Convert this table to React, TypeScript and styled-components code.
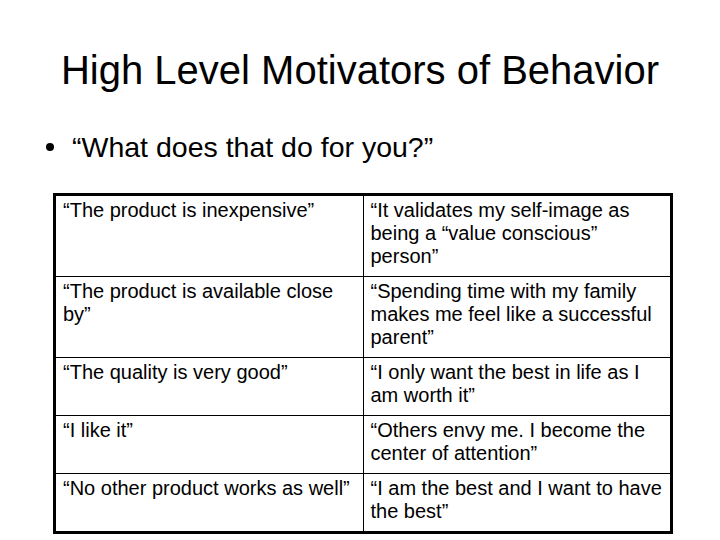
import React from "react";
import styled, { createGlobalStyle } from "styled-components";

const GlobalStyle = createGlobalStyle`
  html, body {
    margin: 0;
    padding: 0;
    background: #fff;
  }
  body {
    font-family: "Liberation Sans", Arial, sans-serif;
    color: #000;
  }
`;

const Slide = styled.div`
  width: 720px;
  height: 540px;
  overflow: hidden;
  display: flex;
  flex-direction: column;
  background: #fff;
`;

const Title = styled.h1`
  margin: 46px 0 0 0;
  font-size: 40px;
  line-height: 48px;
  font-weight: normal;
  text-align: center;
`;

const BulletList = styled.ul`
  list-style: none;
  margin: 36px 0 0 0;
  padding: 0 0 0 46px;
`;

const BulletItem = styled.li`
  display: flex;
  align-items: center;
  gap: 18px;
  font-size: 28.5px;
  line-height: 34px;
`;

const BulletDot = styled.span`
  width: 8px;
  height: 8px;
  border-radius: 50%;
  background: #000;
  flex-shrink: 0;
`;

const Table = styled.table`
  margin: 29px 0 0 53px;
  width: 620px;
  border-collapse: collapse;
  border: 3px solid #000;
  table-layout: fixed;
`;

const Cell = styled.td`
  border: 1px solid #000;
  vertical-align: top;
  padding: 3px 7px 8px 7px;
  font-size: 20px;
  line-height: 23px;
  width: 50%;
`;

const rows: [string, string][] = [
  [
    "“The product is inexpensive”",
    "“It validates my self-image as being a “value conscious” person”",
  ],
  [
    "“The product is available close by”",
    "“Spending time with my family makes me feel like a successful parent”",
  ],
  ["“The quality is very good”", "“I only want the best in life as I am worth it”"],
  ["“I like it”", "“Others envy me. I become the center of attention”"],
  ["“No other product works as well”", "“I am the best and I want to have the best”"],
];

export default function App() {
  return (
    <Slide>
      <GlobalStyle />
      <Title>High Level Motivators of Behavior</Title>
      <BulletList>
        <BulletItem>
          <BulletDot />
          “What does that do for you?”
        </BulletItem>
      </BulletList>
      <Table>
        <tbody>
          {rows.map(([left, right], i) => (
            <tr key={i}>
              <Cell>{left}</Cell>
              <Cell>{right}</Cell>
            </tr>
          ))}
        </tbody>
      </Table>
    </Slide>
  );
}
